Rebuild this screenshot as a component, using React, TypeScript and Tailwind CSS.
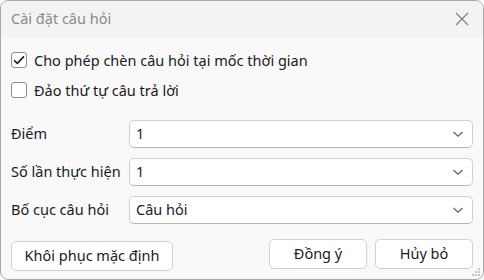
import { useState } from "react"

const font = { fontFamily: '"Noto Sans", "Segoe UI", sans-serif' }

function Chevron() {
  return (
    <svg width="12" height="8" viewBox="0 0 12 8" className="shrink-0">
      <path d="M1.5 2 L6 6.2 L10.5 2" fill="none" stroke="#5a5a5a" strokeWidth="1.1" />
    </svg>
  )
}

interface CheckProps {
  checked: boolean
  onChange: () => void
  label: string
}

const CheckRow = ({ checked, onChange, label }: CheckProps) => (
  <label className="flex items-center gap-[7px] h-[18px] cursor-default select-none" onClick={onChange}>
    <span className="w-[16px] h-[16px] rounded-[3px] border border-[#8c8c8c] bg-white flex items-center justify-center">
      {checked && (
        <svg width="12" height="10" viewBox="0 0 12 10">
          <path d="M1 5.2 L4.3 8.4 L11 1.4" fill="none" stroke="#1b1b1b" strokeWidth="1.6" />
        </svg>
      )}
    </span>
    <span className="text-[14.5px] text-[#1b1b1b] leading-none">{label}</span>
  </label>
)

const SelectRow = ({ label, value }: { label: string; value: string }) => (
  <div className="flex items-center h-[28px]">
    <span className="w-[118px] text-[14.5px] text-[#1b1b1b]">{label}</span>
    <div className="flex-1 h-[28px] bg-white border border-[#cfcfcf] border-b-[#b5b5b5] rounded-[5px] flex items-center justify-between pl-[6px] pr-[8px]">
      <span className="text-[14.5px] text-[#1b1b1b]">{value}</span>
      <Chevron />
    </div>
  </div>
)

export default function App() {
  const [allowInsert, setAllowInsert] = useState(true)
  const [shuffle, setShuffle] = useState(false)

  return (
    <div className="w-[484px] h-[280px] bg-white" style={font}>
      <div className="relative w-full h-full rounded-[8px] border border-[#a9a9a9] bg-[#f9f9f9] overflow-hidden flex flex-col">
        <div className="h-[36px] bg-[#f3f3f3] flex items-center justify-between pl-[10px] pr-[14px] shrink-0">
          <span className="text-[14.5px] text-[#8a8a8a]">Cài đặt câu hỏi</span>
          <svg width="14" height="14" viewBox="0 0 14 14">
            <path d="M1 1 L13 13 M13 1 L1 13" stroke="#7a7a7a" strokeWidth="1.1" />
          </svg>
        </div>
        <div className="flex flex-col px-[10px] pt-[14px]">
          <div className="flex flex-col gap-[12px]">
            <CheckRow checked={allowInsert} onChange={() => setAllowInsert(!allowInsert)} label="Cho phép chèn câu hỏi tại mốc thời gian" />
            <CheckRow checked={shuffle} onChange={() => setShuffle(!shuffle)} label="Đảo thứ tự câu trả lời" />
          </div>
          <div className="flex flex-col gap-[10px] mt-[21px]">
            <SelectRow label="Điểm" value="1" />
            <SelectRow label="Số lần thực hiện" value="1" />
            <SelectRow label="Bố cục câu hỏi" value="Câu hỏi" />
          </div>
          <div className="flex items-end justify-between mt-[15px]">
            <button className="w-[162px] h-[30px] bg-white border border-[#d0d0d0] rounded-[5px] text-[14.5px] text-[#1b1b1b]">
              Khôi phục mặc định
            </button>
            <div className="flex gap-[8px] pb-[2px]">
              <button className="w-[98px] h-[30px] bg-white border border-[#d0d0d0] rounded-[5px] text-[14.5px] text-[#1b1b1b]">
                Đồng ý
              </button>
              <button className="w-[98px] h-[30px] bg-white border border-[#d0d0d0] rounded-[5px] text-[14.5px] text-[#1b1b1b]">
                Hủy bỏ
              </button>
            </div>
          </div>
        </div>
        <svg width="10" height="10" viewBox="0 0 10 10" className="absolute right-[2px] bottom-[2px]">
          <g fill="#c4c4c4">
            <rect x="7" y="1" width="2" height="2" />
            <rect x="4" y="4" width="2" height="2" />
            <rect x="7" y="4" width="2" height="2" />
            <rect x="1" y="7" width="2" height="2" />
            <rect x="4" y="7" width="2" height="2" />
            <rect x="7" y="7" width="2" height="2" />
          </g>
        </svg>
      </div>
    </div>
  )
}
